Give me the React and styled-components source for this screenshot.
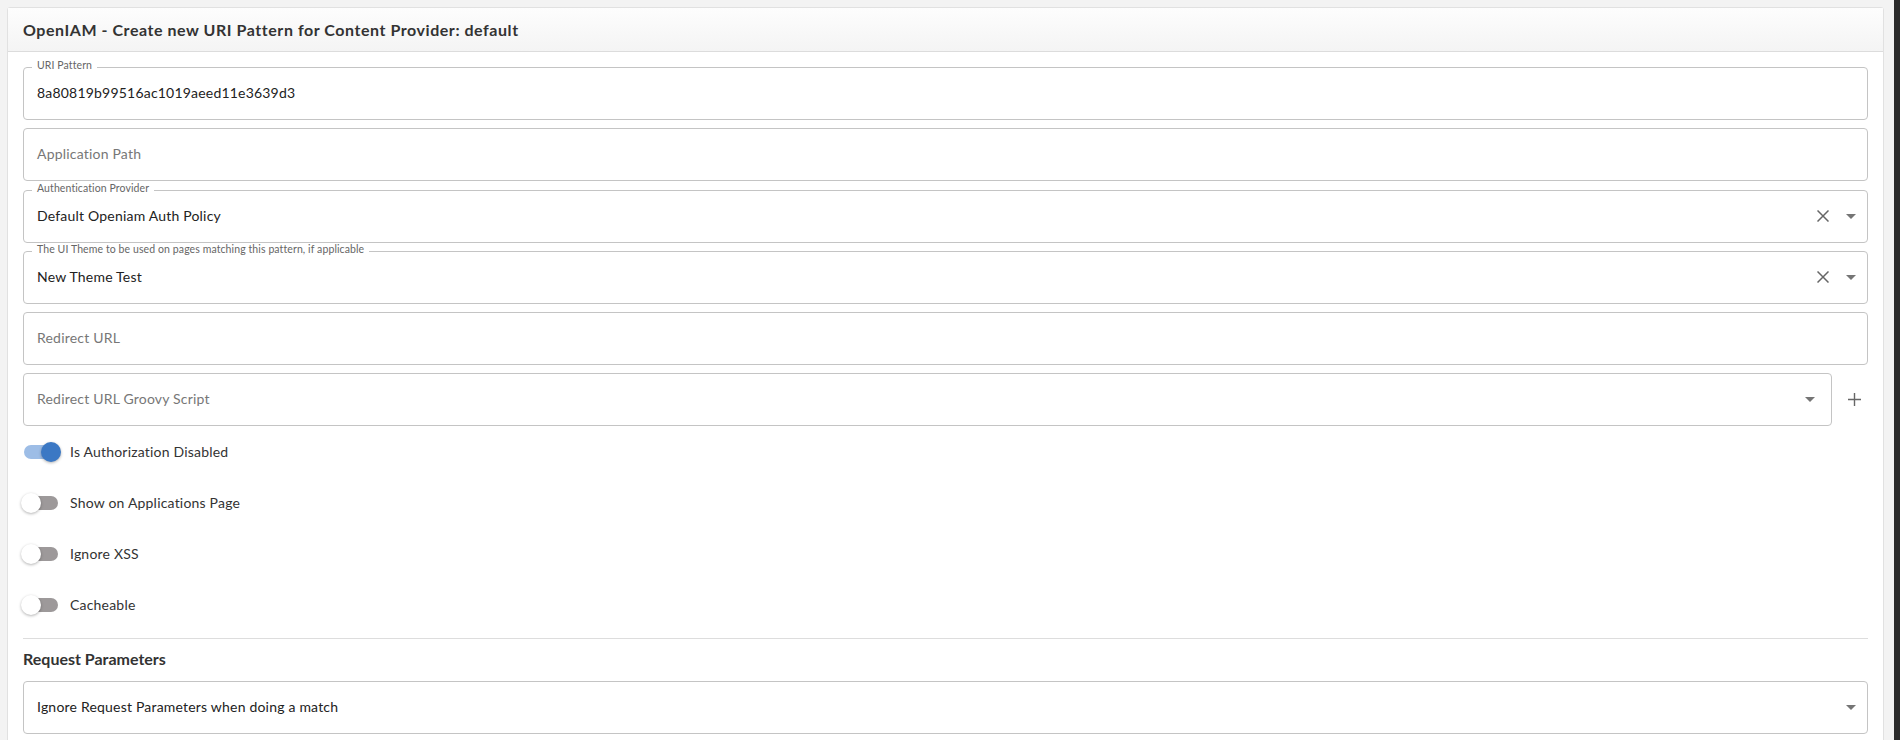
import styled, { createGlobalStyle } from 'styled-components';

const GlobalStyle = createGlobalStyle`
  html, body {
    margin: 0;
    padding: 0;
    height: 100%;
    overflow: hidden;
  }
  body {
    font-family: Lato, "Open Sans", sans-serif;
    background: #f3f3f3;
    color: #333;
  }
  * {
    box-sizing: border-box;
  }
`;

const fields = [
    { label: 'URI Pattern', value: '8a80819b99516ac1019aeed11e3639d3' },
    { placeholder: 'Application Path' },
    { label: 'Authentication Provider', value: 'Default Openiam Auth Policy', select: true, clearable: true },
    { label: 'The UI Theme to be used on pages matching this pattern, if applicable', value: 'New Theme Test', select: true, clearable: true },
    { placeholder: 'Redirect URL' },
];

const toggles = [
    { label: 'Is Authorization Disabled', on: true },
    { label: 'Show on Applications Page', on: false },
    { label: 'Ignore XSS', on: false },
    { label: 'Cacheable', on: false },
];

const Caret = () => (
    <svg width="10" height="5" viewBox="0 0 10 5">
        <path d="M0 0 L10 0 L5 5 Z" fill="#757575" />
    </svg>
);

const ClearIcon = () => (
    <svg width="12" height="12" viewBox="0 0 12 12">
        <path d="M0.5 0.5 L11.5 11.5 M11.5 0.5 L0.5 11.5" stroke="#666" strokeWidth="1.5" fill="none" />
    </svg>
);

const PlusIcon = () => (
    <svg width="13" height="13" viewBox="0 0 13 13">
        <path d="M6.5 0 V13 M0 6.5 H13" stroke="#666" strokeWidth="1.4" fill="none" />
    </svg>
);

const FormField = ({ label, value, placeholder, select, clearable, caretInset = 11 }) => (
    <Field $padRight={caretInset}>
        {label && <FloatLabel>{label}</FloatLabel>}
        {value ? <Value>{value}</Value> : <Placeholder>{placeholder}</Placeholder>}
        {select && (
            <Adornments>
                {clearable && <IconSlot><ClearIcon /></IconSlot>}
                <Caret />
            </Adornments>
        )}
    </Field>
);

const Toggle = ({ label, on }) => (
    <ToggleRow>
        <Switch>
            <Track $on={on} />
            <Thumb $on={on} />
        </Switch>
        <ToggleLabel>{label}</ToggleLabel>
    </ToggleRow>
);

const App = () => {
    return (
        <Screen>
            <GlobalStyle />
            <Main>
                <Card>
                    <CardHeader>OpenIAM - Create new URI Pattern for Content Provider: default</CardHeader>
                    <CardBody>
                        <FieldStack>
                            {fields.map((f, i) => (
                                <FormField key={i} {...f} />
                            ))}
                            <FieldWithAction>
                                <FormField placeholder="Redirect URL Groovy Script" select caretInset={16} />
                                <AddButton><PlusIcon /></AddButton>
                            </FieldWithAction>
                        </FieldStack>

                        {toggles.map((t, i) => (
                            <Toggle key={i} {...t} />
                        ))}

                        <Divider />
                        <SectionTitle>Request Parameters</SectionTitle>
                        <FormField value="Ignore Request Parameters when doing a match" select />
                    </CardBody>
                </Card>
            </Main>
            <Edge />
        </Screen>
    );
};

const Screen = styled.div`
    display: flex;
    height: 740px;
    overflow: hidden;
`;

const Main = styled.div`
    flex: 1;
    padding: 7px 10px 0 7px;
    background: #f3f3f3;
    overflow: hidden;
`;

const Edge = styled.div`
    width: 6px;
    background: #2b2b2b;
`;

const Card = styled.section`
    background: #fff;
    border: 1px solid #e1e1e1;
    border-radius: 3px;
`;

const CardHeader = styled.header`
    height: 44px;
    display: flex;
    align-items: center;
    padding: 0 15px;
    background: linear-gradient(#fdfdfd, #f4f4f4);
    border-bottom: 1px solid #dcdcdc;
    font-size: 16px;
    font-weight: 700;
    letter-spacing: 0.55px;
    color: #333;
`;

const CardBody = styled.div`
    padding: 15px;
`;

const FieldStack = styled.div`
    display: flex;
    flex-direction: column;
    gap: 8.25px;
`;

const Field = styled.div`
    position: relative;
    flex: 1 0 auto;
    height: 53px;
    display: flex;
    align-items: center;
    padding: 0 ${(props) => props.$padRight}px 2px 13px;
    border: 1px solid #c4c4c4;
    border-radius: 4px;
    background: #fff;
    font-size: 14px;
    letter-spacing: 0.2px;
`;

const FloatLabel = styled.span`
    position: absolute;
    top: -9px;
    left: 8px;
    padding: 0 5px;
    background: #fff;
    font-size: 10.5px;
    line-height: 12px;
    letter-spacing: 0.1px;
    color: #666;
    white-space: nowrap;
`;

const Value = styled.span`
    flex: 1;
    color: #222;
`;

const Placeholder = styled.span`
    flex: 1;
    color: #777;
`;

const Adornments = styled.div`
    display: flex;
    align-items: center;
    margin-bottom: -2px;
`;

const IconSlot = styled.span`
    display: flex;
    align-items: center;
    margin-right: 17px;
`;

const FieldWithAction = styled.div`
    display: flex;
    align-items: center;
`;

const AddButton = styled.button`
    width: 28px;
    height: 28px;
    margin-left: 8px;
    padding: 0;
    border: none;
    background: none;
    display: flex;
    align-items: center;
    justify-content: center;
    cursor: pointer;
`;

const ToggleRow = styled.div`
    height: 51px;
    display: flex;
    align-items: center;
`;

const Switch = styled.span`
    position: relative;
    width: 40px;
    height: 20px;
    margin-left: -2px;
    flex-shrink: 0;
`;

const Track = styled.span`
    position: absolute;
    left: 3px;
    top: 3px;
    width: 34px;
    height: 14px;
    border-radius: 7px;
    background: ${(props) => (props.$on ? '#9dbde6' : '#9d999a')};
`;

const Thumb = styled.span`
    position: absolute;
    top: 0;
    left: ${(props) => (props.$on ? '20px' : '0')};
    width: 20px;
    height: 20px;
    border-radius: 50%;
    background: ${(props) => (props.$on ? '#3b78c4' : '#fff')};
    box-shadow: 0 1px 3px rgba(0, 0, 0, 0.3);
`;

const ToggleLabel = styled.span`
    margin-left: 9px;
    font-size: 14px;
    letter-spacing: 0.2px;
    color: #333;
`;

const Divider = styled.hr`
    margin: 8px 0 0;
    border: none;
    border-top: 1px solid #ddd;
`;

const SectionTitle = styled.h3`
    margin: 10px 0 12px;
    font-size: 16px;
    line-height: 20px;
    font-weight: 700;
    color: #333;
`;

export default App;
